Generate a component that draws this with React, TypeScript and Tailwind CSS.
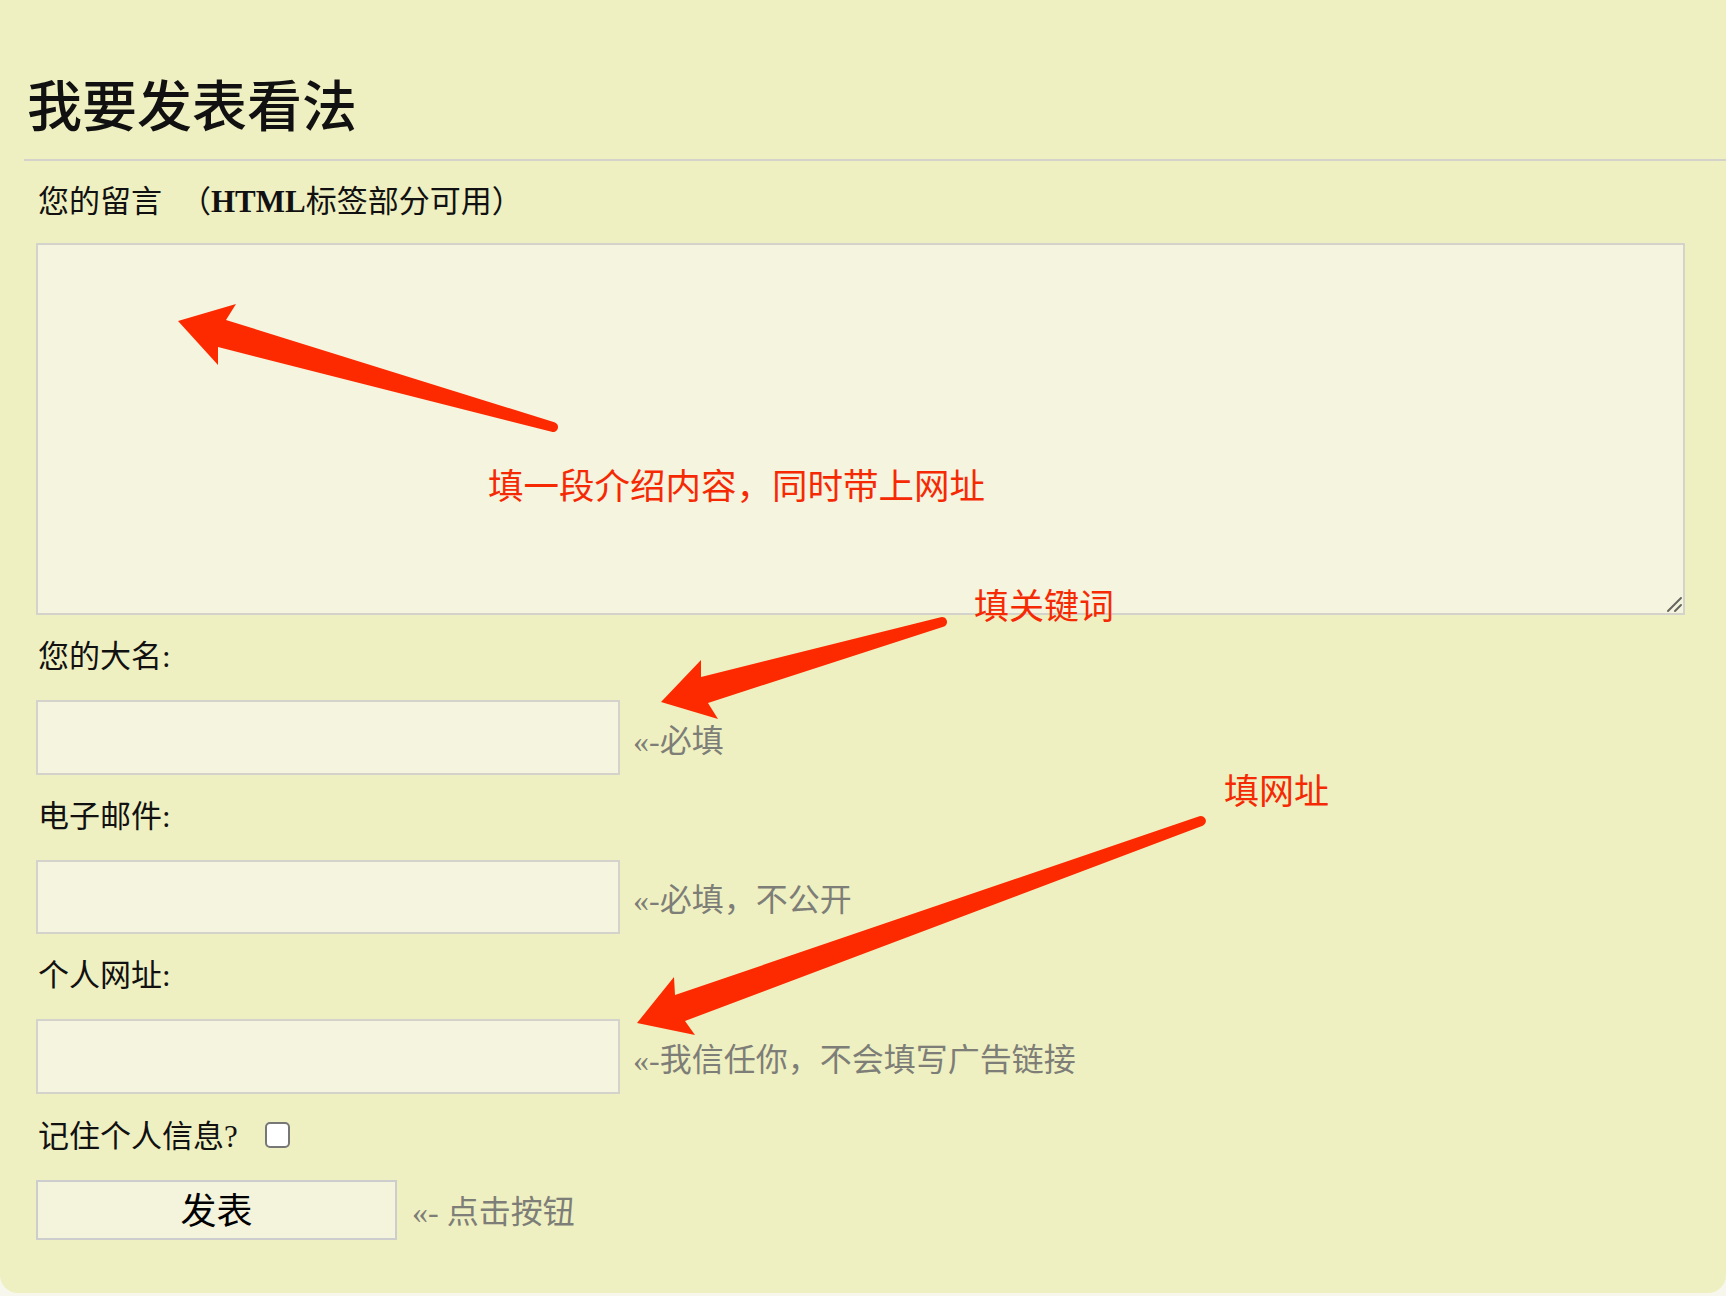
import React from "react";

function Arrows() {
  return (
    <svg
      className="absolute left-0 top-0 pointer-events-none"
      width={1726}
      height={1296}
      viewBox="0 0 1726 1296"
    >
      <g fill="#fd2a00">
        <path d="M178,321 L236,304 L226,320 L554.4,422.2 A5,5 0 0 1 551.6,431.8 L218,347 L218,365 Z" />
        <path d="M661,702 L701,660 L701,677 L940.6,617.2 A5,5 0 0 1 943.4,626.8 L708,703 L718,719 Z" />
        <path d="M637,1023 L674,977 L675,995 L1199.3,816.3 A5,5 0 0 1 1202.7,825.7 L685,1021 L695,1035 Z" />
      </g>
      <g stroke="#66665e" strokeWidth={2} strokeLinecap="round">
        <line x1={1668} y1={611} x2={1681} y2={598} />
        <line x1={1675} y1={611} x2={1681} y2={605} />
      </g>
    </svg>
  );
}

function Field({ label, hint, h }: { label: string; hint: string; h: string }) {
  return (
    <>
      <div className="mt-[22px] text-[31px] leading-[40px] pl-[2px] text-[#111]">{label}</div>
      <div className="mt-[23px] flex items-center">
        <input
          className={`block w-[584px] ${h} bg-[#f5f4df] border-2 border-[#d3d3cc] outline-none`}
        />
        <span className="ml-[13px] mt-[6px] text-[32px] leading-[40px] text-[#7e7e78]">{hint}</span>
      </div>
    </>
  );
}

export default function App() {
  return (
    <div className="w-full h-[1296px] bg-[#f7f7ee] font-['Liberation_Serif','Noto_Sans_CJK_SC',serif]">
      <div className="relative h-[1293px] bg-[#eff0c1] rounded-bl-[18px] rounded-br-[18px] overflow-hidden">
        <div className="pl-[24px]">
          <h2 className="pt-[78px] pl-[3px] text-[55px] leading-[60px] font-medium text-[#111]">
            我要发表看法
          </h2>
          <div className="mt-[21px] border-t-2 border-[#d3d3cb]" />
          <div className="pl-[12px] pr-[41px]">
            <div className="mt-[21px] text-[31px] leading-[40px] pl-[2px] text-[#111]">
              您的留言<span className="ml-[18px]">（<span className="font-bold">HTML</span>标签部分可用）</span>
            </div>
            <textarea className="mt-[21px] block w-full h-[372px] bg-[#f5f4df] border-2 border-[#d3d3cc] outline-none resize-none" />
            <Field label="您的大名:" hint="«-必填" h="h-[75px]" />
            <Field label="电子邮件:" hint="«-必填，不公开" h="h-[74px]" />
            <Field label="个人网址:" hint="«-我信任你，不会填写广告链接" h="h-[75px]" />
            <div className="mt-[23px] flex items-center">
              <span className="text-[31px] leading-[40px] pl-[2px] text-[#111]">记住个人信息?</span>
              <span className="ml-[27px] -mt-[4px] w-[25px] h-[26px] rounded-[5px] border-2 border-[#777] bg-white" />
            </div>
            <div className="mt-[23px] flex items-center">
              <button className="w-[361px] h-[60px] bg-[#f4f3dc] border-2 border-[#cdcdcd] text-[36px] leading-none text-black font-['Noto_Sans_CJK_SC',sans-serif] pb-[4px]">
                发表
              </button>
              <span className="ml-[15px] mt-[4px] text-[32px] leading-[40px] text-[#7e7e78]">«- 点击按钮</span>
            </div>
          </div>
        </div>

        <div className="absolute left-[488px] top-[466px] text-[35.5px] leading-[36px] text-[#f52a05] font-['Noto_Sans_CJK_SC',sans-serif]">
          填一段介绍内容，同时带上网址
        </div>
        <div className="absolute left-[974px] top-[586px] text-[35px] leading-[36px] text-[#f52a05] font-['Noto_Sans_CJK_SC',sans-serif]">
          填关键词
        </div>
        <div className="absolute left-[1224px] top-[771px] text-[35px] leading-[36px] text-[#f52a05] font-['Noto_Sans_CJK_SC',sans-serif]">
          填网址
        </div>
        <Arrows />
      </div>
    </div>
  );
}
